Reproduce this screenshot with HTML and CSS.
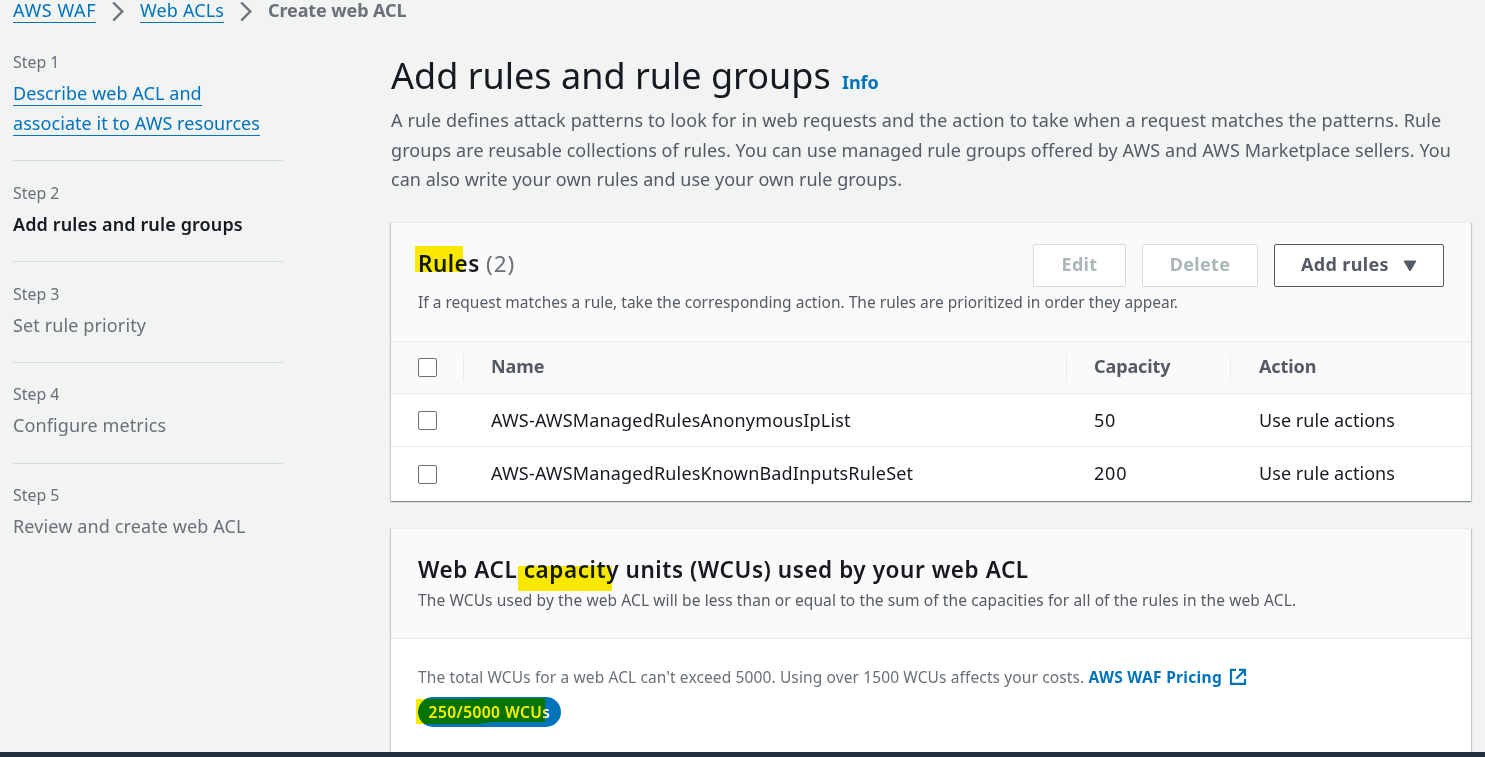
FILE: index.html
```html
<!DOCTYPE html>
<html lang="en">
<head>
<meta charset="utf-8">
<title>Create web ACL</title>
<link rel="stylesheet" href="styles.css">
</head>
<body>
<div class="page">
  <nav class="breadcrumbs">
    <a class="link waf" href="#">AWS WAF</a>
    <svg class="chevron" viewBox="0 0 12 20"><path d="M1.2 1.5 L10.2 10.5 L1.2 19.5"/></svg>
    <a class="link acls" href="#">Web ACLs</a>
    <svg class="chevron" viewBox="0 0 12 20"><path d="M1.2 1.5 L10.2 10.5 L1.2 19.5"/></svg>
    <span class="current">Create web ACL</span>
  </nav>
  <div class="columns">
    <ol class="steps">
      <li class="step"><div class="step-label">Step 1</div><div class="step-title"><a class="link" href="#">Describe web ACL and<br>associate it to AWS resources</a></div></li>
      <li class="step active"><div class="step-label">Step 2</div><div class="step-title">Add rules and rule groups</div></li>
      <li class="step"><div class="step-label">Step 3</div><div class="step-title">Set rule priority</div></li>
      <li class="step"><div class="step-label">Step 4</div><div class="step-title">Configure metrics</div></li>
      <li class="step"><div class="step-label">Step 5</div><div class="step-title">Review and create web ACL</div></li>
    </ol>
    <main class="main">
      <h1 class="title">Add rules and rule groups <a class="info" href="#">Info</a></h1>
      <p class="description"><span class="line wide">A rule defines attack patterns to look for in web requests and the action to take when a request matches the patterns. Rule</span> <span class="line">groups are reusable collections of rules. You can use managed rule groups offered by AWS and AWS Marketplace sellers. You</span> <span class="line tight">can also write your own rules and use your own rule groups.</span></p>

      <section class="card rules">
        <header class="card-header rules-header">
          <div class="heading-row">
            <h2 class="heading"><span class="marked">Rules<i class="marker marker-rules"></i></span> <span class="count">(2)</span></h2>
            <div class="actions">
              <button class="button edit" disabled>Edit</button>
              <button class="button delete" disabled>Delete</button>
              <button class="button add">Add rules<svg class="caret" viewBox="0 0 14 12"><path d="M1 1h12l-6 10z"/></svg></button>
            </div>
          </div>
          <p class="sub">If a request matches a rule, take the corresponding action. The rules are prioritized in order they appear.</p>
        </header>
        <div class="table">
          <div class="row head">
            <div class="cell"><input type="checkbox" class="check"></div>
            <div class="cell">Name</div>
            <div class="cell">Capacity</div>
            <div class="cell">Action</div>
          </div>
          <div class="row">
            <div class="cell"><input type="checkbox" class="check"></div>
            <div class="cell">AWS-AWSManagedRulesAnonymousIpList</div>
            <div class="cell num">50</div>
            <div class="cell action">Use rule actions</div>
          </div>
          <div class="row last">
            <div class="cell"><input type="checkbox" class="check"></div>
            <div class="cell">AWS-AWSManagedRulesKnownBadInputsRuleSet</div>
            <div class="cell num">200</div>
            <div class="cell action">Use rule actions</div>
          </div>
        </div>
      </section>

      <section class="card capacity">
        <header class="card-header capacity-header">
          <h2 class="heading spaced">Web ACL <span class="marked">capacity<i class="marker marker-capacity"></i></span> units (WCUs) used by your web ACL</h2>
          <p class="sub loose">The WCUs used by the web ACL will be less than or equal to the sum of the capacities for all of the rules in the web ACL.</p>
        </header>
        <div class="capacity-body">
          <p class="limits">The total WCUs for a web ACL can't exceed 5000. Using over 1500 WCUs affects your costs. <a class="pricing" href="#">AWS WAF Pricing<svg class="external" viewBox="0 0 18 18"><path d="M7 1.9H2v14h14v-5"/><path d="M10 1.9h6v6M16 1.9L7.2 10.7"/></svg></a></p>
          <span class="badge">250/5000 WCUs<i class="marker marker-badge"></i></span>
        </div>
      </section>
    </main>
  </div>
</div>
<footer class="footer"></footer>
</body>
</html>
```
FILE: styles.css
```css
* { box-sizing: border-box; }

body {
  margin: 0;
  height: 757px;
  overflow: hidden;
  display: flex;
  flex-direction: column;
  background: #f2f3f3;
  color: #16191f;
  font: 18px/30px "Noto Sans", sans-serif;
}

h1, h2, p, ol { margin: 0; padding: 0; }
a { text-decoration: none; }

.page { flex: 1; min-height: 0; overflow: hidden; }
.footer { flex: none; height: 5px; background: #232f3e; }

.link { color: #0073bb; border-bottom: 1px solid #0073bb; }

.breadcrumbs {
  display: flex;
  align-items: center;
  height: 24px;
  padding-left: 13px;
}
.breadcrumbs .link { line-height: 18px; height: 22px; }
.waf { letter-spacing: .6px; width: 83px; white-space: nowrap; }
.acls { letter-spacing: .15px; width: 84px; white-space: nowrap; }
.chevron {
  width: 12px;
  height: 20px;
  margin: 0 16px 2px;
  fill: none;
  stroke: #687078;
  stroke-width: 2.4;
}
.chevron + .acls { margin-left: 0; }
.current { color: #687078; font-weight: 700; line-height: 18px; height: 22px; letter-spacing: -.1px; }

.columns { display: flex; padding-left: 13px; }

.steps { width: 270px; list-style: none; padding-top: 6px; }
.step { padding: 21px 0 22px; border-bottom: 1px solid #d5dbdb; }
.step:nth-child(3) { padding-bottom: 22px; }
.step:nth-child(4) { padding-top: 20px; padding-bottom: 23px; }
.step:last-child { border-bottom: 0; padding-top: 20px; }
.step-label { font-size: 15.9px; line-height: 22px; margin-bottom: 5px; color: #687078; }
.step-title { color: #687078; letter-spacing: .12px; white-space: nowrap; }
.step-title .link { letter-spacing: .06px; }
.active .step-title { color: #16191f; font-weight: 600; }

.main { width: 1080px; margin-left: 108px; padding-top: 27px; }

.title { font-size: 36px; font-weight: 400; line-height: 50px; white-space: nowrap; }
.info { font-size: 18px; font-weight: 700; color: #0073bb; margin-left: 2px; letter-spacing: -.1px; }

.description { margin-top: -1px; color: #545b64; line-height: 29.7px; }
.line { display: block; white-space: nowrap; letter-spacing: .075px; }
.wide { letter-spacing: .122px; }
.tight { letter-spacing: .025px; }

.card {
  background: #fff;
  border-top: 1px solid #eaeded;
  box-shadow: 0 1px 1px rgba(0, 28, 36, .3), 1px 1px 1px rgba(0, 28, 36, .15), -1px 1px 1px rgba(0, 28, 36, .15);
}
.card-header { background: #fafafa; border-bottom: 1px solid #eaeded; padding: 0 27px; }
.rules { height: 279px; margin-top: 27px; }
.rules-header { height: 119px; padding-top: 21px; }
.heading-row { display: flex; justify-content: space-between; height: 43px; }
.heading { font-size: 22.5px; font-weight: 600; line-height: 40px; letter-spacing: .45px; white-space: nowrap; }
.spaced { letter-spacing: .56px; }
.count { color: #687078; font-weight: 400; letter-spacing: .9px; }
.sub { font-size: 15.5px; line-height: 22px; color: #545b64; letter-spacing: .02px; white-space: nowrap; margin-top: 4px; }
.loose { letter-spacing: .105px; }

.actions { display: flex; gap: 16px; }
.button {
  height: 43px;
  padding: 0 0 4px;
  display: flex;
  align-items: center;
  justify-content: center;
  background: #fff;
  border: 1px solid #545b64;
  border-radius: 2px;
  color: #545b64;
  font: 700 18px/30px "Noto Sans", sans-serif;
  letter-spacing: .35px;
}
.button:disabled { border-color: #d5dbdb; color: #aab7b8; }
.edit { width: 93px; }
.delete { width: 116px; }
.add { width: 170px; }
.caret { width: 14px; height: 12px; margin: 5px 0 0 14px; fill: #545b64; stroke: #545b64; stroke-linejoin: round; }

.row {
  display: grid;
  grid-template-columns: 73px 603px 164px 1fr;
  align-items: center;
  height: 53px;
  border-bottom: 1px solid #eaeded;
}
.row.last { border-bottom: 0; height: 54px; }
.cell { padding-left: 27px; line-height: 27px; height: 27px; letter-spacing: .17px; white-space: nowrap; }
.cell.action { letter-spacing: .05px; }
.cell.num { letter-spacing: .8px; }
.cell:last-child { padding-left: 28px; }
.last .cell, .head .cell { line-height: 25px; }
.head { height: 52px; background: #fafafa; color: #545b64; font-weight: 700; }
.head .cell { border-right: 1px solid #eaeded; letter-spacing: -.1px; }
.head .cell:last-child { border-right: 0; }
.check {
  appearance: none;
  display: block;
  width: 19px;
  height: 19px;
  margin: 4px 0 0;
  background: #fff;
  border: 1px solid #687078;
  border-radius: 2px;
}

.capacity { height: 260px; margin-top: 27px; }
.capacity-header { height: 110px; padding-top: 21px; }
.capacity-header .sub { margin-top: -1px; }
.capacity-body { padding: 27px 27px 0; }
.limits { font-size: 15.5px; line-height: 22px; color: #687078; letter-spacing: .12px; white-space: nowrap; }
.pricing { color: #0073bb; font-weight: 700; letter-spacing: .3px; }
.external { width: 18px; height: 18px; margin-left: 7px; vertical-align: -3px; fill: none; stroke: #0073bb; stroke-width: 2.2; }

.badge {
  position: relative;
  display: flex;
  align-items: center;
  justify-content: center;
  width: 143px;
  height: 30px;
  margin-top: 9px;
  padding-bottom: 1px;
  border-radius: 15px;
  background: #0073bb;
  color: #fff;
  font-size: 15.5px;
  font-weight: 600;
  letter-spacing: .45px;
  white-space: nowrap;
}

.marked { position: relative; }
.marker { position: absolute; background: #fde800; mix-blend-mode: darken; }
.marker-rules { left: -3px; top: -2px; width: 48px; height: 26px; }
.marker-capacity { left: -6px; top: 12px; width: 94px; height: 25px; }
.marker-badge {
  left: -2px;
  top: 0;
  width: 129px;
  height: 27px;
  clip-path: polygon(0 2px, 55px 2px, 68px 1px, 129px 1px, 129px 25px, 76px 25px, 62px 27px, 0 27px);
}
```
